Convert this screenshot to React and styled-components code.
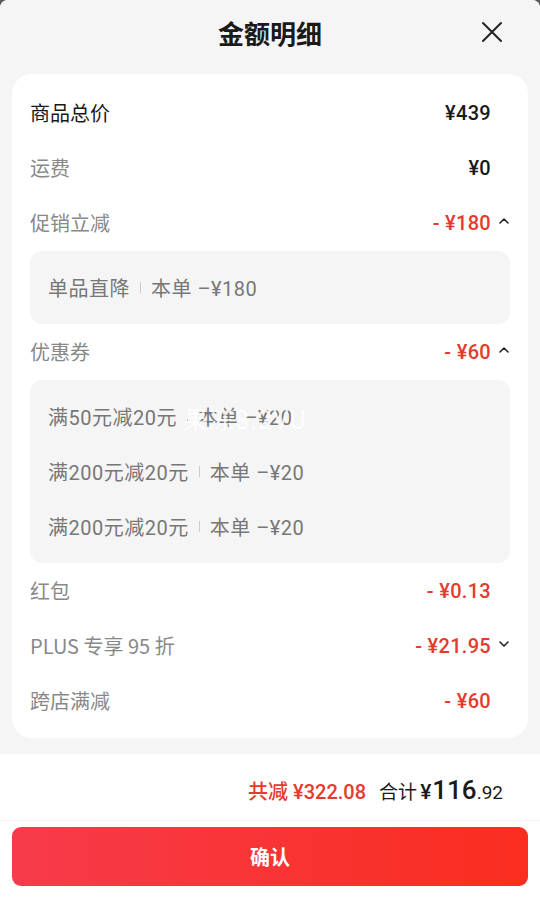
import styled, { createGlobalStyle } from 'styled-components';

const GlobalStyle = createGlobalStyle`
  html, body {
    margin: 0;
    padding: 0;
    background: #5a5a5a;
  }
  body {
    font-family: Roboto, "Noto Sans CJK SC", sans-serif;
  }
`;

const rows = [
  { label: '商品总价', value: '¥439', strong: true },
  { label: '运费', value: '¥0' },
  {
    label: '促销立减',
    value: '- ¥180',
    red: true,
    caret: 'up',
    details: [{ name: '单品直降', amount: '本单 \u2013\u00a5180' }],
  },
  {
    label: '优惠券',
    value: '- ¥60',
    red: true,
    caret: 'up',
    details: [
      { name: '满50元减20元', amount: '本单 \u2013\u00a520' },
      { name: '满200元减20元', amount: '本单 \u2013\u00a520' },
      { name: '满200元减20元', amount: '本单 \u2013\u00a520' },
    ],
  },
  { label: '红包', value: '- ¥0.13', red: true },
  { label: 'PLUS 专享 95 折', value: '- ¥21.95', red: true, caret: 'down' },
  { label: '跨店满减', value: '- ¥60', red: true },
];

function Caret({ dir }) {
  return (
    <svg width="12" height="12" viewBox="0 0 12 12">
      <path
        d={dir === 'up' ? 'M2 8 L6 4 L10 8' : 'M2 4 L6 8 L10 4'}
        fill="none"
        stroke="#222"
        strokeWidth="1.6"
        strokeLinecap="round"
        strokeLinejoin="round"
      />
    </svg>
  );
}

function App() {
  return (
    <Sheet>
      <GlobalStyle />
      <Top>
        <Header>
          <Title>金额明细</Title>
          <Close aria-label="close">
            <svg width="22" height="22" viewBox="0 0 22 22">
              <path d="M2 2 L20 20 M20 2 L2 20" stroke="#222" strokeWidth="2" strokeLinecap="round" />
            </svg>
          </Close>
        </Header>
        <Card>
          {rows.map((r, i) => (
            <div key={i}>
              <Row>
                <Label $strong={r.strong}>{r.label}</Label>
                <Value $red={r.red}>{r.value}</Value>
                <CaretSlot>{r.caret && <Caret dir={r.caret} />}</CaretSlot>
              </Row>
              {r.details && (
                <SubBox>
                  {r.details.map((d, j) => (
                    <SubLine key={j}>
                      {d.name}
                      <Sep />
                      {d.amount}
                    </SubLine>
                  ))}
                </SubBox>
              )}
            </div>
          ))}
          <Watermark>果冻8.2VU</Watermark>
        </Card>
      </Top>
      <Footer>
        <Summary>
          <Saved>共减 ¥322.08</Saved>
          <Total>
            合计 <Yen>¥</Yen>
            <Big>116</Big>.92
          </Total>
        </Summary>
        <Confirm>确认</Confirm>
      </Footer>
    </Sheet>
  );
}

const Sheet = styled.div`
  width: 540px;
  height: 900px;
  background: #fff;
  border-radius: 8px 8px 0 0;
  overflow: hidden;
  display: flex;
  flex-direction: column;
`;

const Top = styled.div`
  background: #f5f5f5;
  padding: 0 12px 16px;
`;

const Header = styled.div`
  height: 64px;
  margin-bottom: 10px;
  display: flex;
  align-items: center;
  justify-content: center;
  position: relative;
`;

const Title = styled.h1`
  margin: 0;
  font-size: 26px;
  font-weight: 700;
  color: #1a1a1a;
  font-family: "Noto Sans CJK SC", sans-serif;
`;

const Close = styled.button`
  position: absolute;
  right: 25px;
  top: 21px;
  width: 22px;
  height: 22px;
  padding: 0;
  border: none;
  background: none;
  display: flex;
`;

const Card = styled.div`
  position: relative;
  background: #fff;
  border-radius: 20px;
  padding: 11px 18px 10px;
`;

const Row = styled.div`
  height: 55px;
  display: flex;
  align-items: center;
`;

const Label = styled.span`
  flex: 1;
  font-size: 20px;
  color: ${(p) => (p.$strong ? '#1a1a1a' : '#888')};
  font-family: "Noto Sans CJK SC", sans-serif;
`;

const Value = styled.span`
  font-size: 20px;
  font-weight: 500;
  letter-spacing: 0.3px;
  color: ${(p) => (p.$red ? '#e53a2c' : '#1a1a1a')};
`;

const CaretSlot = styled.span`
  width: 19px;
  display: flex;
  justify-content: flex-end;
  align-items: center;
  margin-top: -3px;
`;

const SubBox = styled.div`
  background: #f5f5f5;
  border-radius: 12px;
  padding: 9px 18px;
  margin-top: 1px;
`;

const SubLine = styled.div`
  height: 55px;
  display: flex;
  align-items: center;
  font-size: 20px;
  letter-spacing: 0.5px;
  color: #777;
  white-space: pre;
  font-family: Roboto, "Noto Sans CJK SC", sans-serif;
`;

const Sep = styled.span`
  display: inline-block;
  width: 1px;
  height: 11px;
  background: #ccc;
  margin: 0 10px;
`;

const Watermark = styled.div`
  position: absolute;
  left: 171px;
  top: 326px;
  font-size: 25px;
  color: rgba(255, 255, 255, 0.85);
  letter-spacing: 1px;
  pointer-events: none;
`;

const Footer = styled.div`
  flex: 1;
  display: flex;
  flex-direction: column;
`;

const Summary = styled.div`
  box-sizing: border-box;
  height: 67px;
  padding: 6px 37px 0 0;
  display: flex;
  justify-content: flex-end;
  align-items: center;
  gap: 13px;
  border-bottom: 1px solid #f0f0f0;
  font-family: Roboto, "Noto Sans CJK SC", sans-serif;
`;

const Saved = styled.span`
  font-size: 20px;
  color: #e53a2c;
  font-weight: 500;
`;

const Total = styled.span`
  font-size: 19px;
  color: #1a1a1a;
  display: flex;
  align-items: baseline;
`;

const Yen = styled.span`
  font-size: 21px;
  font-weight: 500;
  margin-left: 3px;
`;

const Big = styled.span`
  font-size: 26px;
  font-weight: 500;
  margin-left: 1px;
`;

const Confirm = styled.button`
  margin: 6px 12px 0;
  height: 59px;
  border: none;
  border-radius: 9px;
  background: linear-gradient(90deg, #f73b4b 0%, #fa2d1f 100%);
  color: #fff;
  font-size: 20px;
  font-weight: 700;
  font-family: "Noto Sans CJK SC", sans-serif;
`;

export default App;
